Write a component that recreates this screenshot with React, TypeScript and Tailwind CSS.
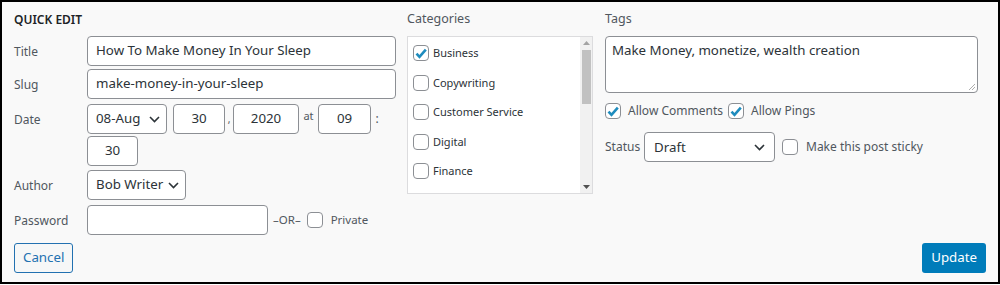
import type { ReactNode } from "react";

const font = { fontFamily: '"Noto Sans", "Open Sans", sans-serif' };

const Chevron = () => (
  <svg width="11" height="7" viewBox="0 0 11 7" className="shrink-0">
    <path d="M1 1l4.5 4.5L10 1" fill="none" stroke="#2c3338" strokeWidth="1.6" />
  </svg>
);

const Checkbox = ({ checked = false }: { checked?: boolean }) => (
  <span className="flex h-4 w-4 shrink-0 items-center justify-center rounded-[4px] border border-[#8c8f94] bg-white">
    {checked && (
      <svg width="12" height="11" viewBox="0 0 12 11">
        <path d="M1.5 5.6l3 3.2L10.8 1.6" fill="none" stroke="#1e8cbe" strokeWidth="2.6" />
      </svg>
    )}
  </span>
);

const Field = ({ label, children }: { label: string; children: ReactNode }) => (
  <div className="flex items-start">
    <span className="w-[73px] shrink-0 pt-[7px] text-[12px] text-[#50575e]">{label}</span>
    {children}
  </div>
);

const Box = ({ className, children }: { className: string; children?: ReactNode }) => (
  <div
    className={`flex h-[30px] items-center rounded-[4px] border border-[#8c8f94] bg-white text-[13.3px] text-[#2c3338] ${className}`}
  >
    {children}
  </div>
);

const categories = ["Business", "Copywriting", "Customer Service", "Digital", "Finance"];

export default function App() {
  return (
    <div className="h-[285px] w-[1000px] bg-white" style={font}>
      <div className="flex h-[284px] flex-col border-2 border-black bg-[#f9f9f9] pl-3 pr-3">
        <div className="flex">
          {/* left fieldset */}
          <div className="w-[392px] shrink-0">
            <div className="flex h-[34px] items-center pt-[1px] text-[12px] font-semibold text-[#1d2327]">QUICK EDIT</div>
            <div className="flex flex-col">
              <Field label="Title">
                <Box className="w-[309px] px-[8px]">How To Make Money In Your Sleep</Box>
              </Field>
              <div className="mt-[3px]">
                <Field label="Slug">
                  <Box className="w-[309px] px-[8px]">make-money-in-your-sleep</Box>
                </Field>
              </div>
              <div className="mt-[5px]">
                <Field label="Date">
                  <div className="flex flex-col gap-[2px]">
                    <div className="flex items-center text-[12px] text-[#50575e]">
                      <Box className="w-[80px] justify-between pl-[8px] pr-[6px]">
                        08-Aug
                        <Chevron />
                      </Box>
                      <Box className="ml-[6px] w-[52px] justify-center">30</Box>
                      <span className="w-[8px] text-center text-[10px]">,</span>
                      <Box className="w-[66px] justify-center">2020</Box>
                      <span className="w-[19px] pb-[6px] text-center text-[11px]">at</span>
                      <Box className="w-[53px] justify-center">09</Box>
                      <span className="w-[12px] text-center">:</span>
                    </div>
                    <Box className="w-[51px] justify-center">30</Box>
                  </div>
                </Field>
              </div>
              <div className="mt-[4px]">
                <Field label="Author">
                  <Box className="w-[99px] justify-between pl-[8px] pr-[6px]">
                    Bob Writer
                    <Chevron />
                  </Box>
                </Field>
              </div>
              <div className="mt-[5px]">
                <Field label="Password">
                  <div className="flex items-center">
                    <Box className="w-[181px]" />
                    <span className="ml-[5px] text-[11.5px] text-[#50575e]">–OR–</span>
                    <span className="ml-[6px]">
                      <Checkbox />
                    </span>
                    <span className="ml-[8px] text-[11.5px] text-[#50575e]">Private</span>
                  </div>
                </Field>
              </div>
            </div>
          </div>

          {/* categories */}
          <div className="ml-[1px] w-[186px] shrink-0">
            <div className="flex h-[34px] items-center pt-[1px] text-[12.5px] text-[#50575e]">Categories</div>
            <div className="flex h-[158px] border border-[#dcdcde] bg-white">
              <div className="flex flex-1 flex-col pl-[5px] pt-[8px]">
                {categories.map((c, i) => (
                  <div key={c} className="flex h-[30px] items-start gap-[4px]">
                    <Checkbox checked={i === 0} />
                    <span className="text-[11px] leading-4 text-[#2c3338]">{c}</span>
                  </div>
                ))}
              </div>
              <div className="flex w-[12px] flex-col items-center bg-[#f1f1f1] py-[4px]">
                <svg width="7" height="4" viewBox="0 0 7 4">
                  <path d="M0 4L3.5 0L7 4z" fill="#a3a3a3" />
                </svg>
                <div className="mt-[5px] h-[54px] w-[9px] bg-[#c1c1c1]" />
                <div className="flex-1" />
                <svg width="7" height="4" viewBox="0 0 7 4">
                  <path d="M0 0L3.5 4L7 0z" fill="#505050" />
                </svg>
              </div>
            </div>
          </div>

          {/* tags and status */}
          <div className="ml-[12px] w-[373px] shrink-0">
            <div className="flex h-[34px] items-center pt-[1px] text-[12.5px] text-[#50575e]">Tags</div>
            <div className="relative h-[57px] rounded-[4px] border border-[#8c8f94] bg-white px-[6px] pt-[4px] text-[13.3px] text-[#2c3338]">
              Make Money, monetize, wealth creation
              <svg width="6" height="6" viewBox="0 0 6 6" className="absolute bottom-[2px] right-[2px]">
                <path d="M0 6L6 0M3 6L6 3" stroke="#999" strokeWidth="0.8" />
              </svg>
            </div>
            <div className="mt-[9px] flex items-center text-[12px] text-[#50575e]">
              <Checkbox checked />
              <span className="ml-[7px]">Allow Comments</span>
              <span className="ml-[5px]">
                <Checkbox checked />
              </span>
              <span className="ml-[7px]">Allow Pings</span>
            </div>
            <div className="mt-[12px] flex items-center text-[12px] text-[#50575e]">
              <span className="w-[39px]">Status</span>
              <Box className="w-[131px] justify-between pl-[9px] pr-[9px]">
                <span className="pt-[2px]">Draft</span>
                <Chevron />
              </Box>
              <span className="ml-[7px]">
                <Checkbox />
              </span>
              <span className="ml-[8px]">Make this post sticky</span>
            </div>
          </div>
        </div>

        <div className="mt-auto mb-[9px] flex items-center justify-between">
          <button className="h-[30px] rounded-[3px] border border-[#2271b1] bg-[#f6f7f7] px-[8px] text-[13.3px] text-[#2271b1]">
            Cancel
          </button>
          <button className="h-[30px] rounded-[3px] bg-[#007cba] px-[9px] text-[13.3px] text-white">Update</button>
        </div>
      </div>
    </div>
  );
}
